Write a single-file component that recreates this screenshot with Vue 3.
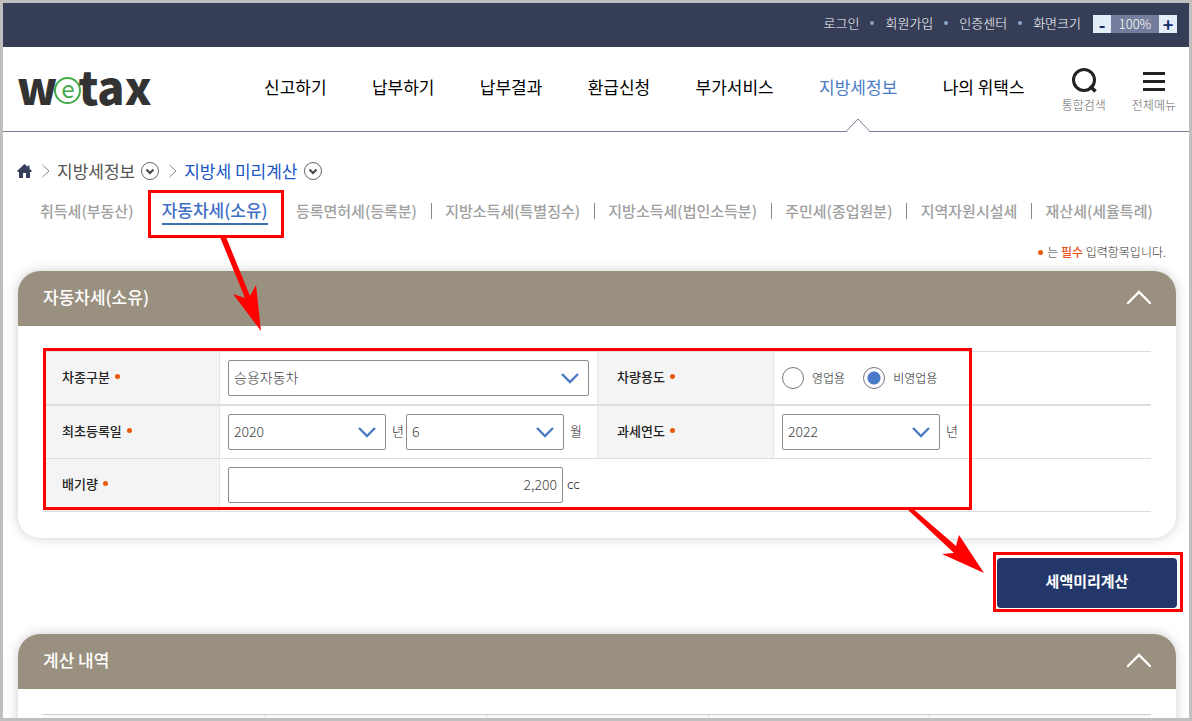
<script setup>
import { ref } from 'vue';

const userLinks = ['로그인', '회원가입', '인증센터', '화면크기'];

const menus = [
  { name: '신고하기' },
  { name: '납부하기' },
  { name: '납부결과' },
  { name: '환급신청' },
  { name: '부가서비스' },
  { name: '지방세정보', active: true },
  { name: '나의 위택스' },
];

const tabs = [
  { name: '취득세(부동산)' },
  { name: '자동차세(소유)', active: true },
  { name: '등록면허세(등록분)' },
  { name: '지방소득세(특별징수)' },
  { name: '지방소득세(법인소득분)' },
  { name: '주민세(종업원분)' },
  { name: '지역자원시설세' },
  { name: '재산세(세율특례)' },
];

const zoomLevel = ref(100);
const carType = ref('승용자동차');
const regYear = ref('2020');
const regMonth = ref('6');
const taxYear = ref('2022');
const usage = ref('private');
const displacement = ref('2,200');
</script>

<template>
  <div class="page">
    <div class="topbar">
      <ul class="user-links">
        <li v-for="link in userLinks" :key="link"><a href="#">{{ link }}</a></li>
      </ul>
      <div class="zoom">
        <button type="button" aria-label="축소" @click="zoomLevel -= 10">-</button>
        <span>{{ zoomLevel }}%</span>
        <button type="button" aria-label="확대" @click="zoomLevel += 10">+</button>
      </div>
    </div>

    <header class="header">
      <a href="#" class="logo"><span>w</span><span class="logo-e">e</span><span>tax</span></a>
      <nav class="menu">
        <a v-for="menu in menus" :key="menu.name" href="#" :class="{ active: menu.active }">
          {{ menu.name }}
          <svg v-if="menu.active" class="pointer" width="26" height="14" viewBox="0 0 26 14">
            <path d="M1 13.5 L2 12.5 L13 1 L24 12.5 L25 13.5" fill="#fff" stroke="#76839b" />
            <path d="M2.5 13.5 H23.5" stroke="#fff" />
          </svg>
        </a>
      </nav>
      <div class="tools">
        <button type="button">
          <svg width="28" height="28" viewBox="0 0 28 28" fill="none" stroke="#222" stroke-width="3">
            <circle cx="14" cy="13" r="10.5" />
            <path d="M20 19 L25.5 24.5" stroke-width="3.5" />
          </svg>
          통합검색
        </button>
        <button type="button">
          <svg width="28" height="28" viewBox="0 0 28 28" stroke="#222" stroke-width="3">
            <path d="M3 6.5 H25 M3 14.5 H25 M3 22.5 H25" />
          </svg>
          전체메뉴
        </button>
      </div>
    </header>

    <main class="main">
      <div class="breadcrumb">
        <a href="#" aria-label="홈" class="home">
          <svg width="15" height="14" viewBox="0 0 15 14" fill="#36405c">
            <path d="M7.5 0 L0 7 L1 8 H2 V14 H6 V9 H9 V14 H13 V8 H14 L15 7 L12.5 4.6 V1.5 H10.8 V3 Z" />
          </svg>
        </a>
        <svg class="arrow" width="8" height="14" viewBox="0 0 8 14" fill="none" stroke="#888">
          <path d="M0.5 1 L7 7 L0.5 13" />
        </svg>
        <a href="#">지방세정보</a>
        <button type="button" class="more" aria-label="지방세정보 메뉴">
          <svg width="18" height="18" viewBox="0 0 18 18" fill="none">
            <circle cx="9" cy="9" r="8.5" stroke="#666" />
            <path d="M5.5 7.5 L9 11 L12.5 7.5" stroke="#444" stroke-width="2" />
          </svg>
        </button>
        <svg class="arrow" width="8" height="14" viewBox="0 0 8 14" fill="none" stroke="#888">
          <path d="M0.5 1 L7 7 L0.5 13" />
        </svg>
        <a href="#" class="current">지방세 미리계산</a>
        <button type="button" class="more" aria-label="지방세 미리계산 메뉴">
          <svg width="18" height="18" viewBox="0 0 18 18" fill="none">
            <circle cx="9" cy="9" r="8.5" stroke="#666" />
            <path d="M5.5 7.5 L9 11 L12.5 7.5" stroke="#444" stroke-width="2" />
          </svg>
        </button>
      </div>

      <div class="tabs">
        <template v-for="(tab, index) in tabs" :key="tab.name">
          <span v-if="index > 0" class="bar" :class="{ hidden: index < 3 }"></span>
          <a href="#" :class="{ active: tab.active }">
            {{ tab.name }}
            <svg v-if="tab.active" class="mark-arrow" width="60" height="100" viewBox="0 0 60 100" fill="red">
              <path d="M17 0 L21 0 L45 59 L51 48 L56 94 L28 57 L40 61 L15 0 Z" />
            </svg>
          </a>
        </template>
      </div>

      <p class="notice"><i class="dot"></i> 는 <strong>필수</strong> 입력항목입니다.</p>

      <section class="card">
        <h2 class="card-title">
          자동차세(소유)
          <button type="button" aria-label="접기">
            <svg width="26" height="16" viewBox="0 0 26 16" fill="none" stroke="#fff" stroke-width="2.4">
              <path d="M3 14 L14 3 L25 14" stroke-linecap="round" />
            </svg>
          </button>
        </h2>
        <div class="card-body">
          <table class="form-table">
            <colgroup>
              <col class="col-label" />
              <col />
              <col class="col-label" />
              <col />
            </colgroup>
            <tbody>
              <tr class="thick">
                <th scope="row"><label for="car-type">차종구분</label><i class="dot"></i></th>
                <td>
                  <div class="select wide">
                    <select id="car-type" v-model="carType">
                      <option>승용자동차</option>
                      <option>승합자동차</option>
                    </select>
                    <svg width="20" height="12" viewBox="0 0 20 12"><path d="M2 2 L10 10 L18 2" /></svg>
                  </div>
                </td>
                <th scope="row">차량용도<i class="dot"></i></th>
                <td>
                  <div class="field radios">
                    <label><input v-model="usage" type="radio" name="usage" value="business" />영업용</label>
                    <label><input v-model="usage" type="radio" name="usage" value="private" />비영업용</label>
                  </div>
                </td>
              </tr>
              <tr>
                <th scope="row"><label for="reg-year">최초등록일</label><i class="dot"></i></th>
                <td>
                  <div class="field">
                    <div class="select">
                      <select id="reg-year" v-model="regYear"><option>2020</option></select>
                      <svg width="20" height="12" viewBox="0 0 20 12"><path d="M2 2 L10 10 L18 2" /></svg>
                    </div>
                    <label class="unit" for="reg-year">년</label>
                    <div class="select">
                      <select id="reg-month" v-model="regMonth"><option>6</option></select>
                      <svg width="20" height="12" viewBox="0 0 20 12"><path d="M2 2 L10 10 L18 2" /></svg>
                    </div>
                    <label class="unit" for="reg-month">월</label>
                  </div>
                </td>
                <th scope="row"><label for="tax-year">과세연도</label><i class="dot"></i></th>
                <td>
                  <div class="field">
                    <div class="select">
                      <select id="tax-year" v-model="taxYear"><option>2022</option></select>
                      <svg width="20" height="12" viewBox="0 0 20 12"><path d="M2 2 L10 10 L18 2" /></svg>
                    </div>
                    <label class="unit" for="tax-year">년</label>
                  </div>
                </td>
              </tr>
              <tr>
                <th scope="row"><label for="displacement">배기량</label><i class="dot"></i></th>
                <td colspan="3">
                  <div class="field">
                    <input id="displacement" v-model="displacement" type="text" class="text-input" />
                    <label class="unit cc" for="displacement">cc</label>
                  </div>
                </td>
              </tr>
            </tbody>
          </table>
          <div class="mark-form">
            <svg class="mark-arrow" width="80" height="68" viewBox="0 0 80 68" fill="red">
              <path d="M0 2 L4 0 L49 39 L52 28 L77 66 L35 47 L47 46 Z" />
            </svg>
          </div>
        </div>
      </section>

      <div class="actions">
        <button type="button" class="submit">세액미리계산</button>
      </div>

      <section class="card">
        <h2 class="card-title">
          계산 내역
          <button type="button" aria-label="접기">
            <svg width="26" height="16" viewBox="0 0 26 16" fill="none" stroke="#fff" stroke-width="2.4">
              <path d="M3 14 L14 3 L25 14" stroke-linecap="round" />
            </svg>
          </button>
        </h2>
        <div class="card-body">
          <table class="result-table">
            <thead>
              <tr>
                <th v-for="n in 5" :key="n" scope="col"></th>
              </tr>
            </thead>
          </table>
        </div>
      </section>
    </main>
  </div>
</template>

<style>
body {
  margin: 0;
  background: #fff;
}
</style>

<style scoped>
* {
  box-sizing: border-box;
}

.page {
  height: 100vh;
  overflow: hidden;
  border: 3px solid #bfbfbf;
  background: #fff;
  color: #222;
  font-family: 'Noto Sans CJK KR', 'Noto Sans', sans-serif;
  font-size: 14px;
  line-height: 20px;
}

a {
  color: inherit;
  text-decoration: none;
}

button {
  padding: 0;
  border: 0;
  background: none;
  color: inherit;
  font-family: inherit;
  cursor: pointer;
}

svg {
  display: block;
}

.topbar {
  display: flex;
  justify-content: flex-end;
  gap: 12px;
  height: 44px;
  padding: 12px 12px 0 0;
  background: #363e57;
  color: #fff;
  font-size: 13px;
  font-weight: 300;
  line-height: 16px;
}

.user-links {
  display: flex;
  margin: 0;
  padding: 0;
  list-style: none;
}

.user-links li {
  display: flex;
}

.user-links li + li::before {
  content: '';
  width: 4px;
  height: 4px;
  margin: 6px 11px 0;
  border-radius: 50%;
  background: #8ba3c4;
}

.zoom {
  display: flex;
  height: 18px;
  background: #747e9c;
  line-height: 18px;
}

.zoom span {
  width: 48px;
  text-align: center;
}

.zoom button {
  width: 18px;
  background: #e3edf8;
  color: #10296b;
  font-size: 18px;
  font-weight: 700;
  line-height: 14px;
}

.header {
  display: flex;
  height: 85px;
  padding: 0 13px 0 14px;
  border-bottom: 1px solid #76839b;
}

.logo {
  display: flex;
  align-items: center;
  flex: 0 0 247px;
  height: 78px;
  color: #333;
  font-size: 45px;
  font-weight: 900;
  line-height: 78px;
}

.logo-e {
  width: 27px;
  height: 27px;
  margin: 8px -3px 0;
  border: 2px solid #43ab49;
  border-radius: 50%;
  color: #43ab49;
  font-size: 24px;
  font-weight: 400;
  line-height: 18px;
  text-align: center;
}

.menu {
  display: flex;
  justify-content: space-between;
  flex: 1;
  margin-right: 37px;
  color: #000;
  font-size: 17px;
  line-height: 80px;
}

.menu a {
  position: relative;
  white-space: nowrap;
}

.menu a.active {
  color: #4a7bc8;
}

.pointer {
  position: absolute;
  bottom: -1px;
  left: calc(50% - 13px);
}

.tools {
  display: flex;
  gap: 26px;
  padding-top: 20px;
}

.tools button {
  display: flex;
  flex-direction: column;
  align-items: center;
  height: 50px;
  color: #666;
  font-size: 12px;
  font-weight: 300;
  line-height: 20px;
}

.main {
  padding: 27px 13px 0 14px;
}

.breadcrumb {
  display: flex;
  align-items: center;
  height: 24px;
  color: #555;
  font-size: 17px;
}

.home {
  margin-right: 10px;
}

.arrow {
  margin-right: 7px;
}

.more {
  margin: 0 10px 0 6px;
}

.current {
  color: #1a56c4;
}

.tabs {
  display: flex;
  align-items: center;
  justify-content: space-between;
  height: 28px;
  margin-top: 14px;
  padding: 0 23px;
  color: #a0a0a0;
  font-size: 15px;
  font-weight: 500;
  white-space: nowrap;
}

.tabs .bar {
  width: 1px;
  height: 16px;
  background: #888;
}

.tabs .bar.hidden {
  visibility: hidden;
}

.tabs .active {
  position: relative;
  border-bottom: 2px solid #3f6fb5;
  color: #3f6fc6;
  font-size: 17px;
  line-height: 26px;
}

/* red guide marks */
.tabs .active::after {
  content: '';
  position: absolute;
  inset: -7px -16px -15px -14px;
  border: 3px solid #f00;
}

.tabs .mark-arrow {
  position: absolute;
  top: 40px;
  left: 43px;
  z-index: 1;
}

.mark-form {
  position: absolute;
  top: 22px;
  bottom: 28px;
  left: 25px;
  width: 929px;
  border: 3px solid #f00;
  pointer-events: none;
}

.mark-form .mark-arrow {
  position: absolute;
  top: 100%;
  right: -18px;
  z-index: 1;
}

.dot {
  display: inline-block;
  width: 5px;
  height: 5px;
  border-radius: 50%;
  background: #e8590c;
  vertical-align: middle;
}

.notice {
  margin: 17px 10px 9px;
  color: #333;
  font-size: 12px;
  font-weight: 300;
  text-align: right;
}

.notice .dot {
  margin: 0 2px 2px 0;
}

.notice strong {
  color: #e8501c;
  font-weight: 500;
}

.card {
  margin: 0 0 14px 1px;
  border-radius: 22px;
  background: #fff;
  box-shadow: 0 0 12px rgba(0, 0, 0, 0.2);
}

.card-title {
  display: flex;
  align-items: center;
  justify-content: space-between;
  height: 55px;
  margin: 0;
  padding: 0 25px 3px;
  border-radius: 22px 22px 0 0;
  background: #9a907f;
  color: #fff;
  font-size: 17px;
  font-weight: 500;
}

.card-body {
  position: relative;
  padding: 25px 25px 26px;
}

table {
  width: 100%;
  border-spacing: 0;
  table-layout: fixed;
}

.form-table {
  border-top: 1px solid #ddd;
}

.form-table .col-label {
  width: 176px;
}

.form-table th,
.form-table td {
  height: 53px;
  padding: 0 8px;
  border-bottom: 1px solid #ddd;
  text-align: left;
}

.form-table .thick th,
.form-table .thick td {
  height: 54px;
  border-bottom-width: 2px;
}

.form-table th {
  padding: 0 0 2px 19px;
  background: #f4f4f4;
  font-size: 13px;
  font-weight: 500;
}

.form-table th + td {
  border-left: 1px solid #e6e6e6;
}

.form-table td + th {
  border-left: 1px solid #e6e6e6;
}

.form-table th .dot {
  margin: 0 0 3px 5px;
}

.field {
  display: flex;
  align-items: center;
}

.select {
  position: relative;
  width: 158px;
}

.select.wide {
  width: 100%;
}

.select select,
.text-input {
  display: block;
  width: 100%;
  height: 36px;
  padding: 0 5px 2px;
  border: 1px solid #8c8c8c;
  border-radius: 2px;
  background: #fff;
  color: #444;
  font-family: inherit;
  font-size: 14px;
  font-weight: 300;
  appearance: none;
}

.select svg {
  position: absolute;
  top: 12px;
  right: 9px;
  fill: none;
  stroke: #4a7bc8;
  stroke-width: 2.4;
  pointer-events: none;
}

.text-input {
  width: 335px;
  text-align: right;
}

.unit {
  width: 20px;
  padding: 0 0 2px 6px;
  font-size: 13px;
  font-weight: 300;
}

.unit.cc {
  padding-left: 4px;
}

.radios {
  gap: 18px;
  font-size: 12px;
  font-weight: 300;
}

.radios label {
  display: flex;
  align-items: center;
  gap: 8px;
}

.radios input {
  width: 22px;
  height: 22px;
  margin: 0;
  border: 1px solid #777;
  border-radius: 50%;
  background: #fff;
  appearance: none;
}

.radios input:checked {
  background: radial-gradient(circle, #4a7bc8 6px, #fff 7px);
}

.actions {
  display: flex;
  justify-content: flex-end;
  margin-bottom: 22px;
}

.submit {
  position: relative;
  width: 180px;
  height: 50px;
  margin: 6px -1px 4px 0;
  padding-bottom: 6px;
  border-radius: 4px;
  background: #23376b;
  color: #fff;
  font-size: 15px;
  font-weight: 700;
}

.submit::after {
  content: '';
  position: absolute;
  inset: -6px -6px -4px -4px;
  border: 3px solid #f00;
}

.result-table {
  border-top: 1px solid #ccc;
}

.result-table th {
  height: 53px;
  background: #fafafa;
}

.result-table th + th {
  border-left: 1px solid #ddd;
}
</style>
